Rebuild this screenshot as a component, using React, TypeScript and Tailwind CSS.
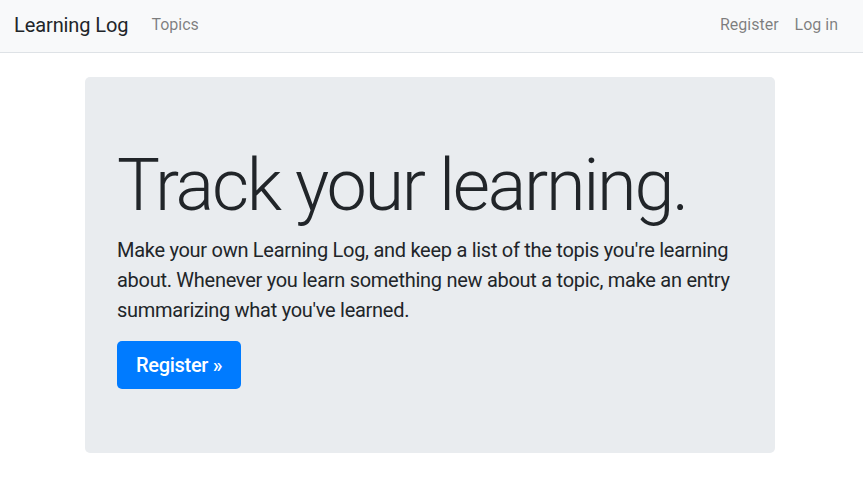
export default function App() {
  return (
    <div className="min-h-screen bg-white font-['Roboto',sans-serif] text-[#212529]">
      <nav className="flex h-[53px] items-center justify-between border-b border-[#dee2e6] bg-[#f8f9fa] pb-[2px] pl-[14px] pr-[25px]">
        <div className="flex items-center gap-[23px]">
          <a className="text-[20px] leading-[30px] tracking-[-0.1px] text-[#212529]">Learning Log</a>
          <a className="text-[16px] leading-6 text-[rgba(0,0,0,0.5)]">Topics</a>
        </div>
        <div className="flex items-center gap-4 text-[16px] leading-6 text-[rgba(0,0,0,0.5)]">
          <a>Register</a>
          <a>Log in</a>
        </div>
      </nav>
      <div className="mt-6 ml-[85px] w-[690px] rounded-[5px] bg-[#e9ecef] px-8 pt-[66px] pb-16">
        <h1 className="mb-[6px] whitespace-nowrap text-[72px] font-light leading-[86.4px] tracking-[-2.3px]">Track your learning.</h1>
        <p className="mb-4 text-[20px] leading-[30px] tracking-[-0.28px]">
          Make your own Learning Log, and keep a list of the topis you're learning about. Whenever you learn something new about a topic, make an entry summarizing what you've learned.
        </p>
        <a className="inline-flex h-12 items-center rounded-[5px] bg-[#007bff] px-[19px] text-[20px] font-medium tracking-[-0.3px] text-white">Register »</a>
      </div>
    </div>
  );
}
